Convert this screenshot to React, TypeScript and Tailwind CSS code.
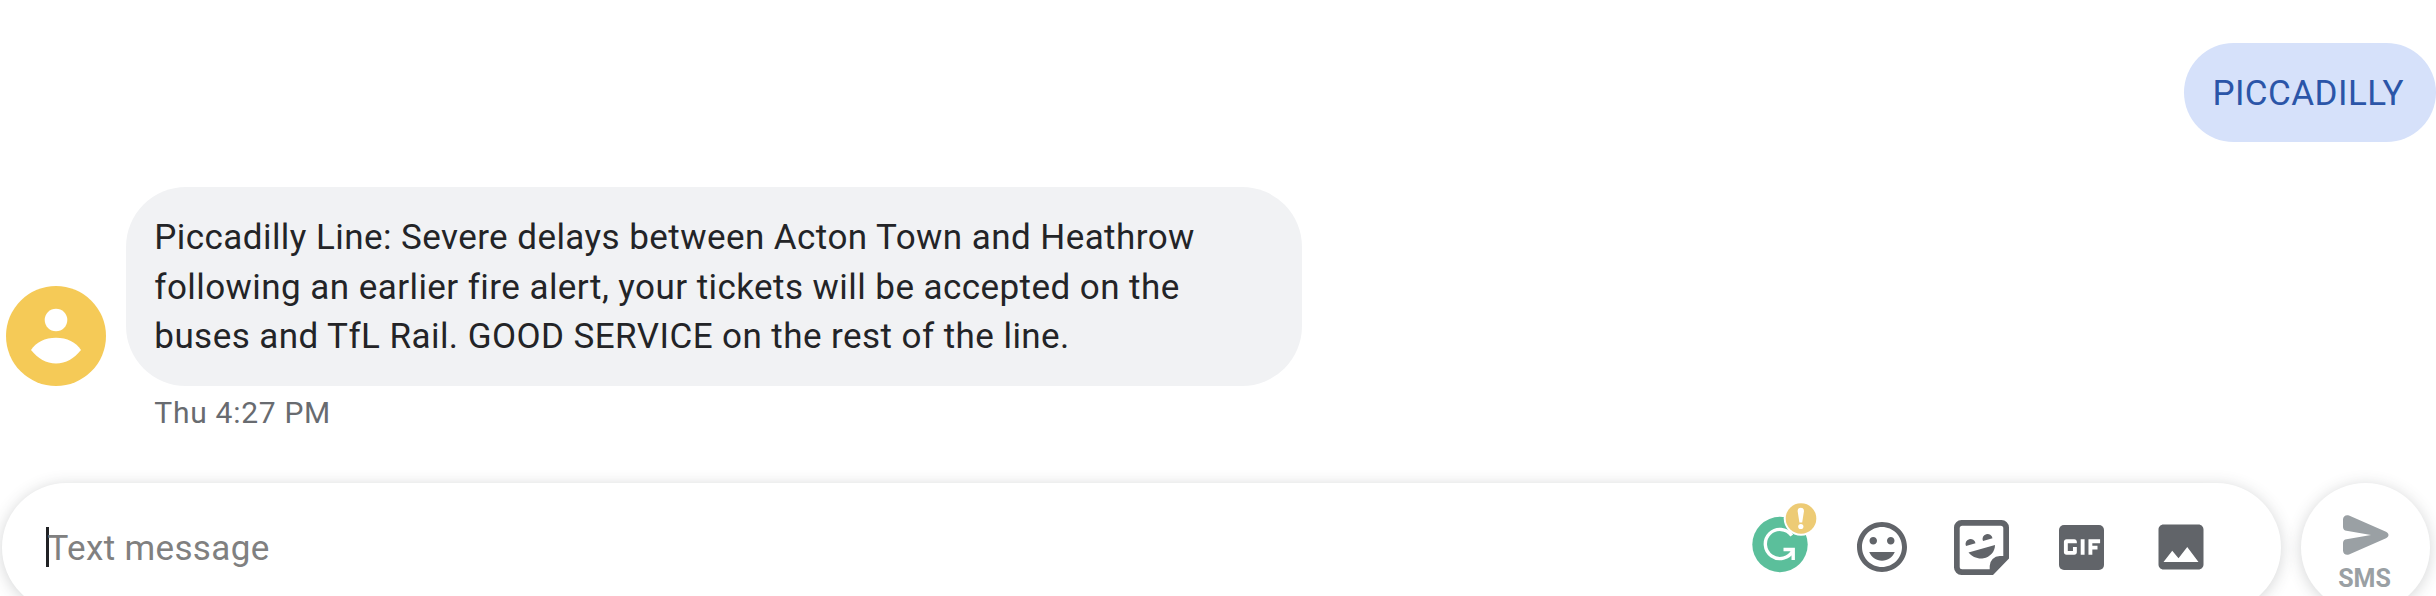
import { MdGif, MdImage, MdInsertEmoticon } from "react-icons/md";

function Avatar() {
  return (
    <svg className="size-[100px] shrink-0" viewBox="0 0 100 100">
      <circle cx="50" cy="50" r="50" fill="#f5ca57" />
      <circle cx="50" cy="34" r="11.3" fill="#fff" />
      <path d="M25 64C30 56 39 51.700 50 51.700S70 56 75 64C68 72.500 60 77.500 50 77.500S32 72.500 25 64Z" fill="#fff" />
    </svg>
  );
}

function GrammarIcon() {
  return (
    <svg className="h-[70px] w-[66px] shrink-0" viewBox="0 0 66 70">
      <circle cx="28" cy="41.500" r="27.700" fill="#5bbf9b" />
      <path d="M39.800 32.500A14.600 14.600 0 1 0 41 47.500M31.500 46.500H41.200V57" fill="none" stroke="#fff" strokeWidth="3.400" />
      <circle cx="49" cy="15.500" r="17.300" fill="#fff" />
      <circle cx="49" cy="15.500" r="15.300" fill="#edcb75" />
      <path d="M45.600 8a3.200 3.200 0 0 1 6.400 0L50.200 19.500h-2.800Z" fill="#fff" />
      <circle cx="48.800" cy="23.500" r="2.600" fill="#fff" />
    </svg>
  );
}

function StickerIcon() {
  return (
    <svg className="size-[55px] shrink-0" viewBox="0 0 55 55" fill="#616469">
      <path fillRule="evenodd" d="M7.500 0H47.500a7.500 7.500 0 0 1 7.500 7.500V38.500L39 55H7.500a7.500 7.500 0 0 1-7.500-7.500V7.500A7.500 7.500 0 0 1 7.500 0ZM8.200 5.700A2.500 2.500 0 0 0 5.700 8.200V46.800A2.500 2.500 0 0 0 8.200 49.300H35.700V46A10 10 0 0 1 45.700 36H49.300V8.200A2.500 2.500 0 0 0 46.800 5.700Z" />
      <path d="M12 26A5 5 0 1 1 21.500 23.200ZM29 21A5 5 0 1 1 38.500 18.200ZM14.500 32.500L41 25C41 32 36 37 29.500 38.300C24 39.200 18 37 14.500 32.500Z" />
    </svg>
  );
}

function SendIcon() {
  return (
    <svg className="h-[40px] w-[46px]" viewBox="0 0 46 40" fill="#9aa0a4">
      <path d="M0 4.500C0 1.200 3 -.7 6 .5L43 16.800C46.300 18.300 46.300 21.700 43 23.200L6 39.500C3 40.700 0 38.800 0 35.500V28C0 25.500 1.500 24.500 3.500 24.200L28 20L3.500 15.800C1.500 15.500 0 14.500 0 12Z" />
    </svg>
  );
}

export default function App() {
  return (
    <div className="flex h-[596px] w-full flex-col overflow-hidden bg-white font-[Roboto,sans-serif] text-[35px] leading-[49.7px]">
      <div className="flex justify-end pt-[42.500px] pr-[0.500px]">
        <div className="flex h-[99.300px] w-[252px] items-center justify-end rounded-full bg-[#d6e1fa] pt-[3px] pr-[31.500px] tracking-[0.450px] text-[#2b55a8]">
          PICCADILLY
        </div>
      </div>

      <div className="mt-[45.500px] flex items-end gap-[20px] pl-[6px]">
        <Avatar />
        <div className="h-[198.700px] w-[1175.500px] rounded-[60px] bg-[#f1f2f4] pt-[25.700px] pl-[28.300px] tracking-[0.440px] whitespace-nowrap text-[#232427]">
          <p>Piccadilly Line: Severe delays between Acton Town and Heathrow</p>
          <p>following an earlier fire alert, your tickets will be accepted on the</p>
          <p>buses and TfL Rail. GOOD SERVICE on the rest of the line.</p>
        </div>
      </div>
      <div className="mt-[7.500px] pl-[154.300px] text-[30px] leading-[40px] tracking-[0.720px] text-[#686b70]">Thu 4:27 PM</div>

      <div className="mt-[49.500px] flex shrink-0 gap-[20px] pl-[1.500px]">
        <div className="flex h-[129px] w-[2279.500px] items-center rounded-full bg-white pl-[44.500px] shadow-[0_2px_15px_rgba(60,64,67,0.22)]">
          <div className="h-[40px] w-[3px] bg-[#202124]" />
          <div className="-ml-[1.500px] grow pt-[2px] tracking-[0.350px] text-[#808080]">Text message</div>
          <div className="flex items-center pr-[70px]">
            <div className="mr-[34px] -mt-[18px]"><GrammarIcon /></div>
            <MdInsertEmoticon className="mr-[42px] size-[60px] text-[#616469]" />
            <StickerIcon />
            <div className="ml-[50px] flex size-[45px] items-center justify-center rounded-[5px] bg-[#616469]">
              <MdGif className="size-[62px] shrink-0 text-white" />
            </div>
            <MdImage className="ml-[47px] size-[60px] text-[#616469]" />
          </div>
        </div>
        <div className="flex size-[129px] flex-col items-center rounded-full bg-white pt-[32px] shadow-[0_2px_15px_rgba(60,64,67,0.22)]">
          <SendIcon />
          <div className="mt-[9.500px] pr-[2px] text-[25px] leading-[29px] font-bold text-[#9aa0a4]">SMS</div>
        </div>
      </div>
    </div>
  );
}
